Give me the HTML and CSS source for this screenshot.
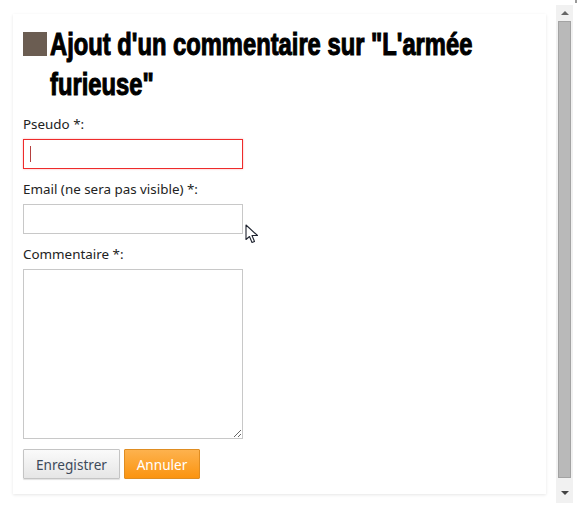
FILE: index.html
```html
<!DOCTYPE html>
<html lang="fr">
<head>
  <meta charset="UTF-8" />
  <title>Ajout d'un commentaire</title>
  <link rel="stylesheet" href="styles.css">
</head>
<body>
  <div class="page">
    <form class="card">
      <h1 class="title"><span class="square"></span><span class="title-text">Ajout d'un commentaire sur "L'armée furieuse"</span></h1>

      <label class="field-label" for="pseudo">Pseudo *:</label>
      <div class="caret-wrap">
        <input type="text" id="pseudo" class="field field-error">
        <span class="caret"></span>
      </div>

      <label class="field-label" for="email">Email (ne sera pas visible) *:</label>
      <input type="text" id="email" class="field">

      <label class="field-label" for="commentaire">Commentaire *:</label>
      <textarea id="commentaire" class="field field-area"></textarea>

      <div class="actions">
        <button type="button" class="btn btn-save">Enregistrer</button>
        <button type="button" class="btn btn-cancel">Annuler</button>
      </div>
    </form>

    <div class="scrollbar">
      <div class="arrow arrow-up"></div>
      <div class="thumb"></div>
      <div class="arrow arrow-down"></div>
    </div>
  </div>

  <div class="corner"></div>

  <!-- mouse pointer from the screenshot -->
  <svg class="pointer" width="14" height="20" viewBox="0 0 14 20">
    <path d="M1 1 L1 15.5 L4.5 12.5 L7 18.5 L9.5 17.5 L7 11.5 L12.5 11.5 Z" fill="#fff" stroke="#1f2430" stroke-width="1.1" stroke-linejoin="round" />
  </svg>
</body>
</html>
```

FILE: styles.css
```css
html, body {
  margin: 0;
  height: 100%;
  background: #fff;
  overflow: hidden;
}

body {
  position: relative;
  font-family: 'Noto Sans', 'Open Sans', sans-serif;
  font-size: 13.4px;
  color: #222;
}

.page {
  display: flex;
  align-items: flex-start;
  padding: 5px 4px 0 13px;
}

.card {
  box-sizing: border-box;
  width: 533px;
  height: 480px;
  margin-top: 9px;
  padding: 11px 10px 0;
  background: #fff;
  box-shadow: 0 1px 3px rgba(0,0,0,0.1);
}

.title {
  display: flex;
  align-items: flex-start;
  gap: 3px;
  margin: 0 0 12px;
  font-family: 'Liberation Sans', sans-serif;
  font-size: 31px;
  font-weight: bold;
  line-height: 40px;
  color: #000;
  -webkit-text-stroke: 1.1px #000;
}

.square {
  flex: none;
  width: 24px;
  height: 24px;
  margin-top: 7px;
  background: #6b5d52;
}

/* no Impact here, so squeeze a bold face to the same width */
.title-text {
  flex: none;
  width: 570px;
  margin-right: -130px;
  transform: scaleX(0.766);
  transform-origin: left top;
}

.field-label {
  display: block;
  height: 15px;
  line-height: 15px;
  margin-bottom: 7px;
}

.caret-wrap {
  position: relative;
}

.caret {
  position: absolute;
  left: 7px;
  top: 7px;
  width: 1px;
  height: 16px;
  background: #b5403f;
}

.field {
  display: block;
  box-sizing: border-box;
  width: 220px;
  height: 30px;
  margin: 0 0 13px;
  padding: 4px 6px;
  border: 1px solid #c8c8c8;
  background: #fff;
  outline: none;
}

.field-error {
  border-color: #ee2b2b;
  box-shadow: 0 0 2px rgba(238,43,43,0.35);
}

.field-area {
  height: 170px;
  margin-bottom: 10px;
  font: inherit;
}

.actions {
  display: flex;
  gap: 4px;
}

.btn {
  box-sizing: border-box;
  height: 30px;
  padding: 0;
  font-family: inherit;
  font-size: 13.6px;
  border-radius: 1px;
}

.btn-save {
  width: 97px;
  color: #3d4a5a;
  background: linear-gradient(#fafafa, #e6e6e6);
  border: 1px solid #c4c4c4;
  box-shadow: 0 1px 1px rgba(0,0,0,0.12);
}

.btn-cancel {
  width: 76px;
  color: #fff;
  background: linear-gradient(#fdb24e, #fb9410);
  border: 1px solid #df8d22;
}

.scrollbar {
  display: flex;
  flex-direction: column;
  align-items: center;
  box-sizing: border-box;
  width: 17px;
  height: 498px;
  margin-left: 10px;
  background: #f1f1f1;
}

.thumb {
  box-sizing: border-box;
  width: 13px;
  height: 457px;
  background: #b9b9b9;
  border: 1px solid #a3a3a3;
}

.arrow {
  width: 0;
  height: 0;
  border-left: 4px solid transparent;
  border-right: 4px solid transparent;
}

.arrow-up {
  margin: 6px 0 6px;
  border-bottom: 4px solid #666;
}

.arrow-down {
  margin-top: 13px;
  border-top: 4px solid #444;
}

.corner {
  position: absolute;
  top: 0;
  right: 0;
  width: 2px;
  height: 3px;
  background: #9a9a9a;
}

.pointer {
  position: absolute;
  left: 245px;
  top: 224px;
}
```
